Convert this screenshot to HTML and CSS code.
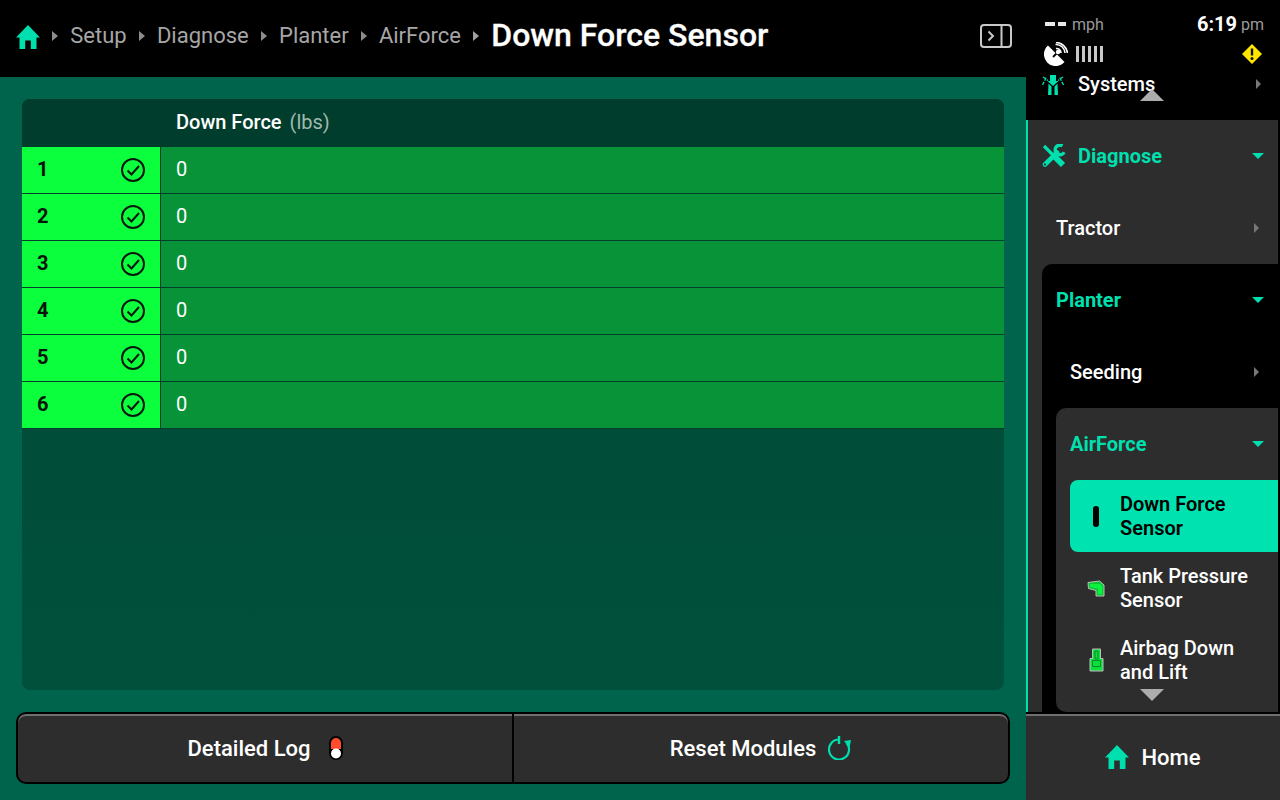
FILE: index.html
```html
<!DOCTYPE html>
<html lang="en">
<head>
<meta charset="utf-8">
<title>Down Force Sensor</title>
<link rel="stylesheet" href="styles.css">
</head>
<body>
<div class="app">
  <main class="main">
    <header class="topbar">
      <svg class="home-icon" viewBox="0 0 24 24"><path d="M12 0 24 12.500H20.500V24H14.800V15.500H9.200V24H3.500V12.500H0Z"/></svg>
      <nav class="crumbs">
        <span class="crumb-arrow"></span><span class="crumb">Setup</span>
        <span class="crumb-arrow"></span><span class="crumb">Diagnose</span>
        <span class="crumb-arrow"></span><span class="crumb">Planter</span>
        <span class="crumb-arrow"></span><span class="crumb">AirForce</span>
        <span class="crumb-arrow crumb-arrow-last"></span><h1 class="title">Down Force Sensor</h1>
      </nav>
      <svg class="panel-icon" viewBox="0 0 32 24" fill="none"><rect x="1" y="1" width="30" height="22" rx="3" stroke="#c8c8c8" stroke-width="2"/><path d="M21.500 1V23" stroke="#c8c8c8" stroke-width="2"/><path d="M8.500 7.500 13 12 8.500 16.500" stroke="#c8c8c8" stroke-width="2"/></svg>
    </header>
    <section class="content">
      <div class="table">
        <div class="thead"><span class="th-name">Down Force</span><span class="th-unit">(lbs)</span></div>
        <div class="row"><div class="row-id"><b>1</b><svg class="check" viewBox="0 0 24 24" fill="none"><circle cx="12" cy="12" r="11" stroke="#07170c" stroke-width="2"/><path d="M6.500 12.500 10.500 16.500 18 8" stroke="#07170c" stroke-width="2"/></svg></div><div class="row-val">0</div></div>
        <div class="row"><div class="row-id"><b>2</b><svg class="check" viewBox="0 0 24 24" fill="none"><circle cx="12" cy="12" r="11" stroke="#07170c" stroke-width="2"/><path d="M6.500 12.500 10.500 16.500 18 8" stroke="#07170c" stroke-width="2"/></svg></div><div class="row-val">0</div></div>
        <div class="row"><div class="row-id"><b>3</b><svg class="check" viewBox="0 0 24 24" fill="none"><circle cx="12" cy="12" r="11" stroke="#07170c" stroke-width="2"/><path d="M6.500 12.500 10.500 16.500 18 8" stroke="#07170c" stroke-width="2"/></svg></div><div class="row-val">0</div></div>
        <div class="row"><div class="row-id"><b>4</b><svg class="check" viewBox="0 0 24 24" fill="none"><circle cx="12" cy="12" r="11" stroke="#07170c" stroke-width="2"/><path d="M6.500 12.500 10.500 16.500 18 8" stroke="#07170c" stroke-width="2"/></svg></div><div class="row-val">0</div></div>
        <div class="row"><div class="row-id"><b>5</b><svg class="check" viewBox="0 0 24 24" fill="none"><circle cx="12" cy="12" r="11" stroke="#07170c" stroke-width="2"/><path d="M6.500 12.500 10.500 16.500 18 8" stroke="#07170c" stroke-width="2"/></svg></div><div class="row-val">0</div></div>
        <div class="row"><div class="row-id"><b>6</b><svg class="check" viewBox="0 0 24 24" fill="none"><circle cx="12" cy="12" r="11" stroke="#07170c" stroke-width="2"/><path d="M6.500 12.500 10.500 16.500 18 8" stroke="#07170c" stroke-width="2"/></svg></div><div class="row-val">0</div></div>
      </div>
      <div class="actions">
        <button class="action action-log"><span>Detailed Log</span>
          <svg class="log-icon" viewBox="0 0 14 24"><rect x="0" y="0" width="14" height="24" rx="7" fill="#000"/><path d="M2 13V7a5 5 0 0 1 10 0v6Z" fill="#ff4b2e"/><circle cx="7" cy="17.500" r="5" fill="#fff"/></svg>
        </button>
        <button class="action action-reset"><span>Reset Modules</span>
          <svg class="reset-icon" viewBox="0 0 24 24" fill="none"><path d="M11 3.500A10 10 0 1 0 19 7.500" stroke="#00dfae" stroke-width="2.200"/><path d="M11 0V8" stroke="#00dfae" stroke-width="2.400"/><path d="M16 5 23 4 21.500 12Z" fill="#00dfae"/></svg>
        </button>
      </div>
    </section>
  </main>
  <aside class="side">
    <div class="status">
      <div class="status-line">
        <span class="speed"><i class="dash dash-a"></i><i class="dash dash-b"></i><span class="unit">mph</span></span>
        <span class="clock"><b>6:19</b><span class="unit">pm</span></span>
      </div>
      <div class="status-line status-icons">
        <span class="signal">
          <svg class="dish" viewBox="0 0 24 24"><path d="M4 3.500 20.500 20A11.700 11.700 0 1 1 4 3.500Z" fill="#fff"/><path d="M12 6.500A4.500 4.500 0 0 1 17 11M11.500 2.500A9 9 0 0 1 21 11M12 0.500A12 12 0 0 1 23.500 11" fill="none" stroke="#fff" stroke-width="1.600"/><path d="M9 15 14 10" stroke="#000" stroke-width="1.800"/><circle cx="14" cy="10" r="2.200" fill="#fff"/></svg>
          <span class="bars"><i></i><i></i><i></i><i></i><i></i></span>
        </span>
        <svg class="warn" viewBox="0 0 20 20"><path d="M10 0 20 10 10 20 0 10Z" fill="#ffe600"/><path d="M10 4.500V11.500" stroke="#111" stroke-width="2.400"/><circle cx="10" cy="14.500" r="1.500" fill="#111"/></svg>
      </div>
    </div>
    <div class="nav">
      <span class="scroll-up"></span>
      <div class="nav-row nav-systems">
        <svg class="nav-icon" viewBox="0 0 24 24"><path d="M8 3H14V9H16.500L11 14 5.500 9H8Z" fill="#00dfae"/><path d="M6.500 11.500 9.500 14.500 9.500 23H6ZM15.500 11.500 12.500 14.500 12.500 23H16Z" fill="#00dfae"/><path d="M0.500 13 4.500 5M1 5 6 8.500M21.500 13 17.500 5M21 5 16 8.500" stroke="#00dfae" stroke-width="1.300" stroke-dasharray="3.500 1.200"/></svg>
        <span class="nav-label">Systems</span><span class="arrow-right"></span>
      </div>
      <div class="tree">
        <div class="nav-row nav-open">
          <svg class="nav-icon" viewBox="0 0 24 24" fill="none"><path d="M2 2 13 13" stroke="#00dfae" stroke-width="3.200"/><path d="M12.500 12.500 21 21" stroke="#00dfae" stroke-width="6"/><path d="M3 20.500 15 8.500" stroke="#00dfae" stroke-width="4.600" stroke-linecap="round"/><path d="M20.500 1.800A4.800 4.800 0 1 0 22.200 8.200" stroke="#00dfae" stroke-width="3.400"/><circle cx="3" cy="20.500" r="1.100" fill="#2d2d2d"/></svg>
          <span class="nav-label">Diagnose</span><span class="arrow-down"></span>
        </div>
        <div class="nav-row nav-l1"><span class="nav-label">Tractor</span><span class="arrow-right"></span></div>
        <div class="group-black">
          <div class="nav-row nav-open nav-l1"><span class="nav-label">Planter</span><span class="arrow-down"></span></div>
          <div class="nav-row nav-l2"><span class="nav-label">Seeding</span><span class="arrow-right"></span></div>
          <div class="group-gray">
            <div class="nav-row nav-open nav-l2"><span class="nav-label">AirForce</span><span class="arrow-down"></span></div>
            <div class="leaf leaf-active"><span class="leaf-icon"><i class="pill"></i></span><span class="leaf-label">Down Force Sensor</span></div>
            <div class="leaf"><span class="leaf-icon"><svg class="tank" viewBox="0 0 18 17"><path d="M1 2.500 12.500 1 17 5V16H9V10.500L1.500 8.500Z" fill="#08c833" stroke="#bdbdbd" stroke-width="1"/><path d="M3 4H13L15 6V14H11V8.500L3 7Z" fill="#0cf23f"/></svg></span><span class="leaf-label">Tank Pressure Sensor</span></div>
            <div class="leaf"><span class="leaf-icon"><svg class="bag" viewBox="0 0 15 24"><path d="M3.500 1H11.500V10.500H14V23H1V10.500H3.500Z" fill="#0be03a" stroke="#bdbdbd" stroke-width="1"/><path d="M6 3H9V11H6ZM3.500 12.500H11.500V18.500H3.500Z" fill="none" stroke="#078a2d"/></svg></span><span class="leaf-label">Airbag Down and Lift</span></div>
          </div>
        </div>
      </div>
      <span class="scroll-down"></span>
    </div>
    <button class="home-btn">
      <svg class="home-small" viewBox="0 0 24 24"><path d="M12 0 24 12.500H20.500V24H14.800V15.500H9.200V24H3.500V12.500H0Z"/></svg>
      <span>Home</span>
    </button>
  </aside>
</div>
</body>
</html>
```
FILE: styles.css
```css
* { box-sizing: border-box; }
html, body { margin: 0; height: 100%; }
body { font-family: Roboto, "Liberation Sans", sans-serif; color: #fff; background: #000; }
.app { display: flex; width: 1280px; height: 800px; overflow: hidden; }

.main { width: 1026px; display: flex; flex-direction: column; background: #00644c; }
.topbar { height: 77px; flex: none; background: #000; display: flex; align-items: center; padding: 0 14px 5px 16px; }
.home-icon { width: 24px; height: 24px; fill: #00dfae; flex: none; margin-top: 1px; }
.crumbs { display: flex; align-items: center; flex: 1; margin-left: 12px; }
.crumb-arrow { width: 0; height: 0; border-left: 6px solid #8c8c8c; border-top: 5.500px solid transparent; border-bottom: 5.500px solid transparent; margin-right: 12.250px; }
.crumb { font-size: 22px; color: #a6a6a6; margin-right: 12px; line-height: 30px; }
.crumb-arrow-last { border-left-color: #a0a0a0; }
.title { font-size: 32px; font-weight: 500; margin: 0; padding-bottom: 2px; line-height: 36px; white-space: nowrap; -webkit-text-stroke: 0.3px #fff; }
.panel-icon { width: 32px; height: 24px; flex: none; }

.content { flex: 1; display: flex; flex-direction: column; padding: 22px 16px 16px; }
.table { margin: 0 6px; flex: 1; border-radius: 8px; overflow: hidden; background: linear-gradient(#004a36, #00503b); }
.thead { height: 48px; background: #003d2c; display: flex; align-items: center; padding: 0 0 2px 154px; gap: 8px; font-size: 20px; }
.th-name { font-weight: 500; }
.th-unit { color: #a2b8b0; font-weight: 400; }
.row { height: 47px; display: flex; border-bottom: 1px solid #033f2a; }
.row-id { width: 139px; background: #0cff3c; color: #05130a; display: flex; align-items: center; justify-content: space-between; padding: 0 15px 0 15px; border-right: 1px solid #033f2a; }
.row-id b { font-weight: 700; font-size: 20px; margin-top: -2px; }
.check { width: 24px; height: 24px; }
.row-val { flex: 1; background: #099339; padding: 0 15px 2px; display: flex; align-items: center; font-size: 20px; }

.actions { flex: none; height: 72px; margin-top: 22px; display: flex; border: 2px solid #000; border-radius: 10px; overflow: hidden; background: #2d2d2d; box-shadow: inset 0 2px 0 #707070; }
.action { flex: 1; border: 0; background: transparent; color: #fff; font: 500 22px Roboto, "Liberation Sans", sans-serif; display: flex; align-items: center; justify-content: center; padding: 0; }
.action-log { gap: 18px; }
.action-reset { gap: 12px; }
.action + .action { border-left: 2px solid #000; }
.log-icon { width: 14px; height: 24px; }
.reset-icon { width: 24px; height: 24px; }

.side { width: 254px; flex: none; display: flex; flex-direction: column; background: #000; }
.status { height: 48px; flex: none; background: #000; padding: 14px 16px 0 18px; position: relative; z-index: 2; }
.status-line { display: flex; justify-content: space-between; align-items: center; height: 20px; }
.speed, .clock { display: flex; align-items: center; }
.dash { display: block; height: 4px; background: #e8e8e8; margin-right: 3px; }
.dash-a { width: 10px; margin-left: 1px; }
.dash-b { width: 8px; margin-right: 6px; }
.unit { font-size: 16px; color: #9a9a9a; }
.clock b { font-size: 20px; font-weight: 700; margin-right: 4px; }
.status-icons { margin-top: 10px; }
.signal { display: flex; align-items: center; gap: 8px; }
.dish { width: 24px; height: 24px; }
.bars { display: flex; gap: 3px; }
.bars i { display: block; width: 3px; height: 16px; background: #c8c8c8; }
.warn { width: 20px; height: 20px; margin-right: 2px; }

.nav { flex: 1; min-height: 0; position: relative; overflow: hidden; }
.scroll-up, .scroll-down { position: absolute; left: 114px; width: 0; height: 0; border-left: 12px solid transparent; border-right: 12px solid transparent; z-index: 3; }
.scroll-up { top: 41px; border-bottom: 12px solid #adadad; }
.scroll-down { bottom: 11px; border-top: 12px solid #adadad; }
.nav-row { height: 72px; display: flex; align-items: center; padding-left: 16px; padding-right: 16px; font-size: 20px; }
.nav-systems { background: #000; }
.nav-icon { width: 24px; height: 24px; flex: none; margin-right: 12px; }
.nav-label { flex: 1; font-weight: 500; }
.nav-open .nav-label { color: #00dfae; font-weight: 700; }
.arrow-right { width: 0; height: 0; border-left: 5px solid #777; border-top: 5.500px solid transparent; border-bottom: 5.500px solid transparent; margin-right: 3px; }
.arrow-down { width: 0; height: 0; border-top: 6px solid #00dfae; border-left: 6px solid transparent; border-right: 6px solid transparent; margin-right: -2px; }
.tree { background: #2d2d2d; border-left: 2px solid #00dfae; margin-right: 2px; min-height: 600px; }
.tree .nav-row { padding-right: 16px; padding-left: 14px; }
.tree .nav-l1 { padding-left: 28px; }
.group-black { margin-left: 14px; background: #000; border-radius: 10px 0 0 0; min-height: 448px; }
.tree .group-black .nav-l1 { padding-left: 14px; }
.tree .group-black > .nav-l2 { padding-left: 28px; }
.tree .group-gray .nav-l2 { padding-left: 14px; }
.group-gray { margin-left: 14px; background: #2d2d2d; border-radius: 10px 0 0 10px; height: 304px; overflow: hidden; }
.leaf { height: 72px; margin-left: 14px; display: flex; align-items: center; font-size: 20px; line-height: 24px; font-weight: 500; }
.leaf-active { background: #00e3b0; color: #000; border-radius: 8px 0 0 8px; font-weight: 600; }
.leaf-icon { width: 50px; flex: none; display: flex; align-items: center; justify-content: center; padding-left: 2px; }
.leaf-label { flex: 1; padding-right: 20px; }
.pill { display: block; width: 6px; height: 21px; border-radius: 3px; background: #000; }
.tank { width: 18px; height: 17px; }
.bag { width: 15px; height: 24px; }

.home-btn { height: 88px; flex: none; border: 0; border-top: 2px solid #000; background: #2d2d2d; box-shadow: inset 0 2px 0 #707070; color: #fff; font: 500 22px Roboto, "Liberation Sans", sans-serif; display: flex; align-items: center; justify-content: center; gap: 12px; padding: 0; }
.home-small { width: 24px; height: 24px; fill: #00dfae; }
```
